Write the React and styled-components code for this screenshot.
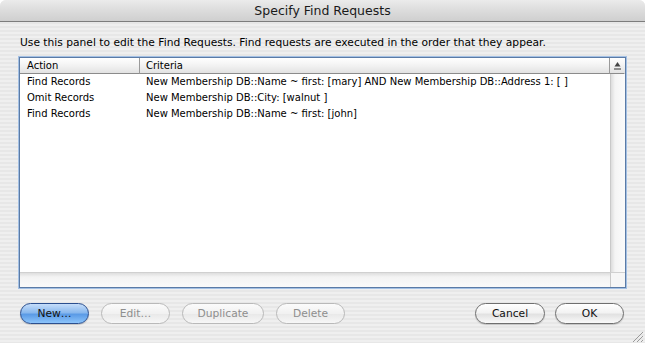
import React from "react";
import styled, { createGlobalStyle } from "styled-components";

const GlobalStyle = createGlobalStyle`
	html, body {
		margin: 0;
		padding: 0;
		background: #ffffff;
	}
	body {
		font-family: "DejaVu Sans", "Liberation Sans", sans-serif;
		font-size: 10px;
		color: #000;
	}
`

const Window = styled.div`
	position: relative;
	width: 645px;
	height: 343px;
	display: flex;
	flex-direction: column;
	border-radius: 6px 6px 0 0;
	overflow: hidden;
	background: repeating-linear-gradient(to bottom, #efefef 0 2px, #e7e7e7 2px 4px);
`

const TitleBar = styled.div`
	height: 21px;
	flex: none;
	display: flex;
	align-items: center;
	justify-content: center;
	font-size: 12.5px;
	color: #1a1a1a;
	background: linear-gradient(to bottom, #ebebeb 0%, #dcdcdc 50%, #cfcfcf 100%);
	border-bottom: 1px solid #7d7d7d;
`

const Body = styled.div`
	flex: 1;
	display: flex;
	flex-direction: column;
	padding: 14px 19px 0 19px;
`

const Intro = styled.p`
	margin: 0 0 7px 1px;
	height: 14px;
	line-height: 14px;
	font-size: 10.7px;
`

const ListBox = styled.div`
	height: 229px;
	display: grid;
	grid-template-columns: 120px 1fr 15px;
	grid-template-rows: 16px 1fr 15px;
	background: #fff;
	border: 1px solid #5b7ba6;
	box-shadow: 0 0 0 1px #a3c0e4;
`

const HeadCell = styled.div`
	display: flex;
	align-items: center;
	padding-left: ${(p) => p.$pad}px;
	background: linear-gradient(to bottom, #ffffff 0%, #f1f1f1 55%, #e2e2e2 100%);
	border-bottom: 1px solid #8b8b8b;
	border-right: 1px solid ${(p) => (p.$last ? "transparent" : "#9a9a9a")};
	justify-content: ${(p) => (p.$center ? "center" : "flex-start")};
`

const Rows = styled.div`
	grid-column: 1 / 3;
	display: grid;
	grid-template-columns: 120px 1fr;
	grid-auto-rows: 16px;
	align-content: start;
`

const Cell = styled.div`
	padding-left: ${(p) => p.$pad}px;
	line-height: 16px;
	white-space: nowrap;
	overflow: hidden;
`

const VScroll = styled.div`
	background: linear-gradient(to right, #dcdcdc 0px, #f4f4f4 4px, #fbfbfb 100%);
	border-left: 1px solid #c9c9c9;
`

const HScroll = styled.div`
	grid-column: 1 / 3;
	background: linear-gradient(to bottom, #dedede 0px, #f3f3f3 4px, #fafafa 100%);
	border-top: 1px solid #d0d0d0;
`

const Corner = styled.div`
	background: #f6f6f6;
	border-left: 1px solid #c9c9c9;
	border-top: 1px solid #d0d0d0;
`

const ButtonRow = styled.div`
	display: flex;
	align-items: center;
	margin-top: 15px;
	padding-left: 1px;
	padding-right: 2px;
`

const Group = styled.div`
	display: flex;
	gap: ${(p) => p.$gap}px;
	margin-left: ${(p) => (p.$right ? "auto" : "0")};
`

const Button = styled.button`
	width: ${(p) => p.$w}px;
	height: 21px;
	padding: 0;
	font-family: "DejaVu Sans", "Liberation Sans", sans-serif;
	font-size: 10.7px;
	border-radius: 11px;
	color: ${(p) => (p.disabled ? "#8e8e8e" : "#111")};
	border: 1px solid ${(p) => (p.$primary ? "#2b4f8f" : p.disabled ? "#b9b9b9" : "#6f6f6f")};
	background: ${(p) =>
		p.$primary
			? "linear-gradient(to bottom, #c6defa 0%, #89b8ee 45%, #5b9be6 55%, #8cc4fb 100%)"
			: p.disabled
			? "linear-gradient(to bottom, #fbfbfb 0%, #f1f1f1 50%, #e9e9e9 55%, #f7f7f7 100%)"
			: "linear-gradient(to bottom, #ffffff 0%, #f3f3f3 45%, #e2e2e2 55%, #fafafa 100%)"};
	box-shadow: ${(p) => (p.disabled ? "none" : "0 1px 1px rgba(0,0,0,0.18)")};
`

const Grip = styled.svg`
	position: absolute;
	right: 2px;
	bottom: 1px;
`

const rows = [
	["Find Records", "New Membership DB::Name ~ first: [mary] AND New Membership DB::Address 1: [ ]"],
	["Omit Records", "New Membership DB::City: [walnut ]"],
	["Find Records", "New Membership DB::Name ~ first: [john]"],
]

function SortIcon() {
	return (
		<svg width="7" height="8" viewBox="0 0 7 8">
			<polygon points="3.5,0 6.5,4.5 0.5,4.5" fill="#444" />
			<rect x="0" y="6.5" width="7" height="1" fill="#333" />
		</svg>
	)
}

function App() {
	return (
		<>
			<GlobalStyle />
			<Window>
				<TitleBar>Specify Find Requests</TitleBar>
				<Body>
					<Intro>
						Use this panel to edit the Find Requests. Find requests are executed in the order that they appear.
					</Intro>
					<ListBox>
						<HeadCell $pad={7}>Action</HeadCell>
						<HeadCell $pad={6}>Criteria</HeadCell>
						<HeadCell $last $center $pad={0}>
							<SortIcon />
						</HeadCell>
						<Rows>
							{rows.map(([action, criteria], i) => (
								<React.Fragment key={i}>
									<Cell $pad={7}>{action}</Cell>
									<Cell $pad={6}>{criteria}</Cell>
								</React.Fragment>
							))}
						</Rows>
						<VScroll />
						<HScroll />
						<Corner />
					</ListBox>
					<ButtonRow>
						<Group $gap={12}>
							<Button $w={69} $primary>New…</Button>
							<Button $w={69} disabled>Edit…</Button>
							<Button $w={82} disabled>Duplicate</Button>
							<Button $w={69} disabled>Delete</Button>
						</Group>
						<Group $right $gap={10}>
							<Button $w={70}>Cancel</Button>
							<Button $w={69}>OK</Button>
						</Group>
					</ButtonRow>
				</Body>
				<Grip width="11" height="11" viewBox="0 0 11 11">
					<line x1="1" y1="11" x2="11" y2="1" stroke="#9a9a9a" />
					<line x1="5" y1="11" x2="11" y2="5" stroke="#9a9a9a" />
					<line x1="9" y1="11" x2="11" y2="9" stroke="#9a9a9a" />
				</Grip>
			</Window>
		</>
	)
}

export default App
